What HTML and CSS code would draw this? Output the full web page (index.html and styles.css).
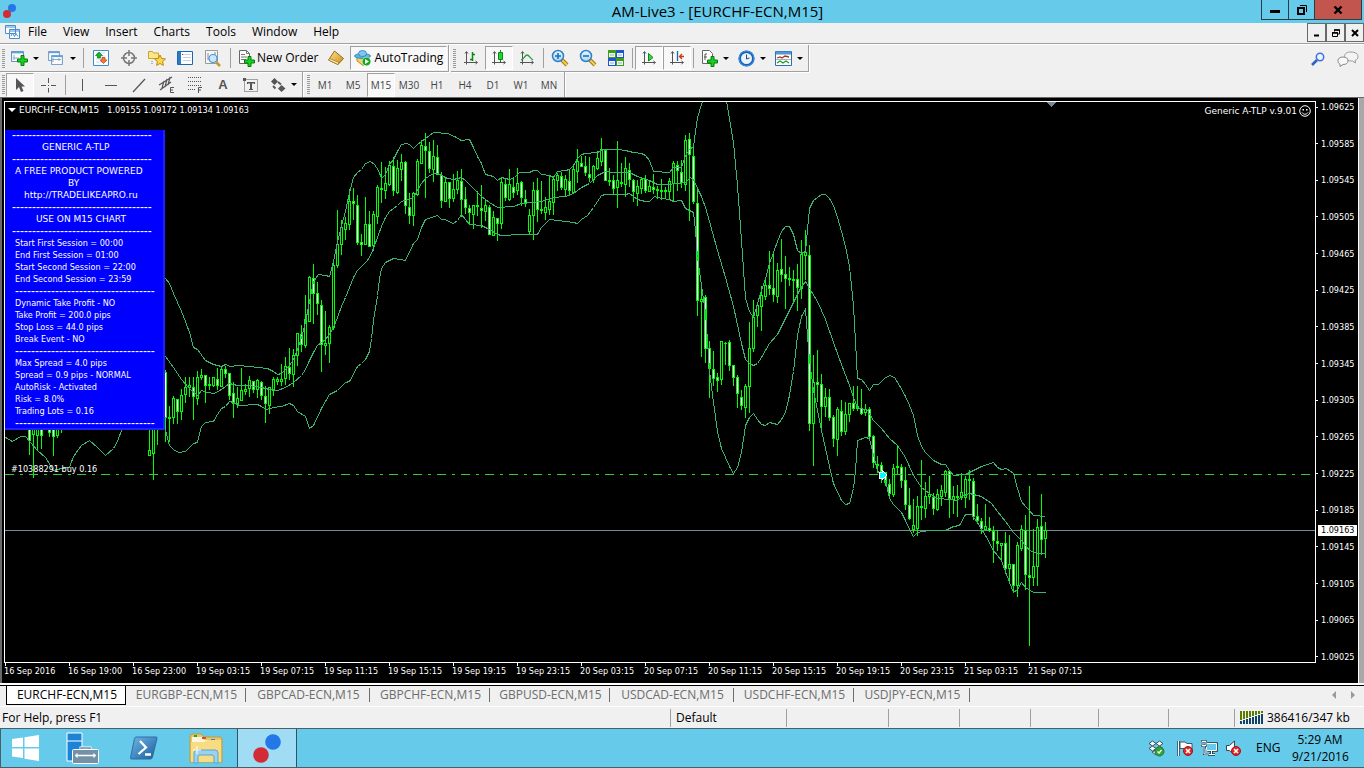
FILE: index.html
```html
<!DOCTYPE html>
<html lang="en">
<head>
<meta charset="utf-8">
<title>AM-Live3 - [EURCHF-ECN,M15]</title>
<link rel="stylesheet" href="styles.css">
</head>
<body>
<svg class="defs" aria-hidden="true">
  <defs>
    <linearGradient id="gold" x1="0" y1="0" x2="1" y2="1"><stop offset="0" stop-color="#ffe79a"/><stop offset="1" stop-color="#c98a12"/></linearGradient>
    <linearGradient id="lens" x1="0" y1="0" x2="0" y2="1"><stop offset="0" stop-color="#e8f6ff"/><stop offset="1" stop-color="#a9d6f5"/></linearGradient>
    <linearGradient id="ps" x1="0" y1="0" x2="1" y2="1"><stop offset="0" stop-color="#6fb7e6"/><stop offset="1" stop-color="#1a5c9c"/></linearGradient>
    <symbol id="plus" viewBox="0 0 11 11"><path d="M4 .5h3V4h3.500v3H7v3.500H4V7H.5V4H4z" fill="#19d021" stroke="#067d0b"/></symbol>
    <symbol id="err" viewBox="0 0 10 10"><circle cx="5" cy="5" r="4.500" fill="#dc2a2a" stroke="#a81212"/><path d="M3 3l4 4M7 3L3 7" stroke="#fff" stroke-width="1.600"/></symbol>
    <symbol id="zoomer" viewBox="0 0 18 18"><path d="M11 11l5 5" stroke="#a87a12" stroke-width="4"/><path d="M11 11l5 5" stroke="#f3cf52" stroke-width="2"/><circle cx="7" cy="7" r="5.500" fill="url(#lens)" stroke="#2f7fc4" stroke-width="1.500"/></symbol>
    <symbol id="axes" viewBox="0 0 16 16"><path d="M3.500 2v12.500M1 12.500h13M2 3.500L3.500 1.500 5 3.500M12.500 11l2 1.500-2 1.500" fill="none" stroke="#555"/></symbol>
    <symbol id="win" viewBox="0 0 16 14"><path d="M.5.5h15v13H.5z" fill="#fff" stroke="#2d6fb3"/><path d="M1 2h14" stroke="#5aa0dc" stroke-width="2"/></symbol>
  </defs>
</svg>
<div class="screen">
  <header class="titlebar">
    <svg class="logo" width="16" height="16" viewBox="0 0 16 16"><circle cx="10" cy="5" r="4" fill="#2377e8"/><circle cx="5" cy="11" r="4" fill="#d22b35"/></svg>
    <h1 class="title">AM-Live3 - [EURCHF-ECN,M15]</h1>
    <div class="caption">
      <button class="cap cap-min" aria-label="Minimize"><svg width="10" height="10" viewBox="0 0 10 10"><path d="M0 5h10v3H0z"/></svg></button>
      <button class="cap cap-max" aria-label="Restore"><svg width="10" height="10" viewBox="0 0 10 10"><path d="M3 .5h6.500V7" fill="none" stroke="#000"/><path d="M1 3h6v6H1z" fill="none" stroke="#000" stroke-width="2"/></svg></button>
      <button class="cap cap-close" aria-label="Close"><svg width="10" height="10" viewBox="0 0 10 10"><path d="M1.500 1.500l7 7M8.500 1.500l-7 7" stroke="#000" stroke-width="2.400"/></svg></button>
    </div>
  </header>

  <nav class="menubar" aria-label="Menu">
    <svg class="doc" width="16" height="15" viewBox="0 0 16 15"><path d="M.5.5h10v8H.5zM4.500 4.500h10v9h-10z" fill="#fff" stroke="#4b8ed0"/><path d="M4.500 6h10M.5 2h10" stroke="#4b8ed0"/><path d="M6 11l1.500-3 2 3.500 1.500-3 2 3" fill="none" stroke="#4b8ed0"/></svg>
    <button>File</button><button>View</button><button>Insert</button><button>Charts</button><button>Tools</button><button>Window</button><button>Help</button>
    <div class="mdi">
      <button aria-label="Minimize chart"><svg width="8" height="8" viewBox="0 0 8 8"><path d="M1 5.500h5v2H1z"/></svg></button>
      <button aria-label="Restore chart"><svg width="8" height="8" viewBox="0 0 8 8"><path d="M2.500 2.500V1h5v4H6M.5 3.500h5v4h-5z" fill="none" stroke="#000"/><path d="M2 1h6M0 4h6" stroke="#000" stroke-width="1.500"/></svg></button>
      <button aria-label="Close chart"><svg width="8" height="8" viewBox="0 0 8 8"><path d="M1 1l6 6M7 1L1 7" stroke="#000" stroke-width="2"/></svg></button>
    </div>
  </nav>

  <div class="toolrow">
    <div class="toolbar lead" role="toolbar" aria-label="Standard">
      <span class="grip"></span>
      <button class="drop" aria-label="New chart"><svg width="18" height="16" viewBox="0 0 18 16"><use href="#win" x="1" y="1" width="13" height="11"/><path d="M4 5v5M3 8h6" stroke="#8ab"/><use href="#plus" x="7" y="5" width="11" height="11"/></svg><i></i></button>
      <button class="drop" aria-label="Profiles"><svg width="18" height="16" viewBox="0 0 18 16"><use href="#win" x="0" y="1" width="14" height="10"/><use href="#win" x="3" y="5" width="14" height="10"/><path d="M5 9.500h9M6 8v4M12 8v3" stroke="#8ab"/></svg><i></i></button>
      <span class="sep"></span>
      <button class="tool" aria-label="Market Watch"><svg width="16" height="16" viewBox="0 0 16 16"><path d="M.5.5h15v15H.5z" fill="#fff" stroke="#3b8ed0"/><path d="M3 3h9M3 6h9M3 9h9M3 12h9" stroke="#cde" /><path d="M6 2L9.500 5.500H7.500V8h-3V5.500H2.500z" fill="#19b52a" stroke="#0b7d17" stroke-width=".7"/><path d="M10.500 13.500L7 10h2V7.500h3V10h2z" fill="#f2793a" stroke="#b83d0c" stroke-width=".7"/></svg></button>
      <button class="tool" aria-label="Data Window"><svg width="16" height="16" viewBox="0 0 16 16"><circle cx="8" cy="8" r="5.500" fill="none" stroke="#777" stroke-width="1.500"/><path d="M8 0v6M8 10v6M0 8h6M10 8h6" stroke="#777" stroke-width="1.500"/></svg></button>
      <button class="tool" aria-label="Navigator"><svg width="18" height="16" viewBox="0 0 18 16"><path d="M.5 8.500v-7h4l1 1.500h5v5.500z" fill="#fbe68a" stroke="#c9a227"/><path d="M4 11v4" stroke="#777" stroke-dasharray="1 1"/><path d="M12 5l1.600 3.500 3.900.4-2.900 2.600.8 3.900L12 13.500l-3.400 1.900.8-3.900-2.900-2.600 3.900-.4z" fill="#ffd84a" stroke="#b98a12"/></svg></button>
      <button class="tool" aria-label="Terminal"><svg width="16" height="14" viewBox="0 0 16 14"><path d="M.5.5h15v13H.5z" fill="#fff" stroke="#1e66b0"/><path d="M1 1h3v12H1z" fill="#2d7ac4"/><path d="M6 3.500h8M6 6.500h8M6 9.500h8" stroke="#bcd3ea"/><path d="M5 3h1v1H5z" fill="#d22"/></svg></button>
      <button class="tool" aria-label="Strategy Tester"><svg width="18" height="17" viewBox="0 0 18 17"><path d="M1.500.5h12v13h-12z" fill="#f6f6f6" stroke="#999"/><path d="M4 3v7M11 2v5" stroke="#88a"/><path d="M12 12l4 4" stroke="#c7962a" stroke-width="2.500"/><circle cx="9" cy="8.500" r="4" fill="#cbe7fb" stroke="#4b94cc" stroke-width="1.200"/></svg></button>
      <span class="sep"></span>
      <button class="label"><svg width="17" height="17" viewBox="0 0 17 17"><path d="M1.500.5h7l3 3v10h-10z" fill="#fff" stroke="#666"/><path d="M8.500.5v3h3M3 4.500h4M3 7h6M3 9.500h5" fill="none" stroke="#777"/><use href="#plus" x="6" y="6" width="11" height="11"/></svg>New Order</button>
      <button class="tool" aria-label="MetaEditor"><svg width="16" height="16" viewBox="0 0 16 16"><path d="M6.500 1L15.500 8.500 10 14.500 .5 10z" fill="url(#gold)" stroke="#9a6a0c"/><path d="M.5 10L10 14.500 11 12.500 1.500 8.500z" fill="#fff3c0" stroke="#9a6a0c" stroke-width=".7"/></svg></button>
      <button class="label pressed"><svg width="18" height="16" viewBox="0 0 18 16"><path d="M3 7l11-1 1 4-6 5.500L3 11z" fill="#f4d160" stroke="#b58d22"/><ellipse cx="8.500" cy="6" rx="8" ry="2.500" fill="#5cb3e6" stroke="#2b7fb8" stroke-width=".8"/><ellipse cx="8.500" cy="3.500" rx="4" ry="3" fill="#7cc8f0" stroke="#2b7fb8" stroke-width=".8"/><circle cx="12.500" cy="11.500" r="4.300" fill="#12a81c" stroke="#fff" stroke-width=".5"/><path d="M11 9l4 2.500-4 2.500z" fill="#fff"/></svg>AutoTrading</button>
    </div>
    <div class="toolbar" role="toolbar" aria-label="Charts">
      <span class="grip"></span>
      <button class="tool" aria-label="Bar chart"><svg width="16" height="16" viewBox="0 0 16 16"><use href="#axes" width="16" height="16"/><path d="M9.500 2v9M7 9.500h2M10 4.500h2" stroke="#078a10" stroke-width="1.500"/></svg></button>
      <button class="tool pressed" aria-label="Candlesticks"><svg width="16" height="16" viewBox="0 0 16 16"><use href="#axes" width="16" height="16"/><path d="M9.500 0v12" stroke="#078a10"/><path d="M7.500 2.500h4v7h-4z" fill="#27d13a" stroke="#078a10"/></svg></button>
      <button class="tool" aria-label="Line chart"><svg width="16" height="16" viewBox="0 0 16 16"><use href="#axes" width="16" height="16"/><path d="M2 10c3-1 4-5 6-5s3 3 6 5" fill="none" stroke="#2d9a35" stroke-width="1.300"/></svg></button>
      <span class="sep"></span>
      <button class="tool" aria-label="Zoom In"><svg width="18" height="18" viewBox="0 0 18 18"><use href="#zoomer" width="18" height="18"/><path d="M4 7h6M7 4v6" stroke="#1f6fb5" stroke-width="1.600"/></svg></button>
      <button class="tool" aria-label="Zoom Out"><svg width="18" height="18" viewBox="0 0 18 18"><use href="#zoomer" width="18" height="18"/><path d="M4 7h6" stroke="#1f6fb5" stroke-width="1.600"/></svg></button>
      <button class="tool" aria-label="Tile Windows"><svg width="16" height="16" viewBox="0 0 16 16"><path d="M0 0h8v8H0z" fill="#3f9d1c"/><path d="M8 0h8v8H8z" fill="#1d55cc"/><path d="M0 8h8v8H0z" fill="#1d55cc"/><path d="M8 8h8v8H8z" fill="#3f9d1c"/><path d="M1 3h6v4H1zM9 3h6v4H9zM1 11h6v4H1zM9 11h6v4H9z" fill="#f4f8ff"/><path d="M2 5h4M10 5h4M2 13h4M10 13h4" stroke="#9ab"/></svg></button>
      <span class="sep"></span>
      <button class="tool pressed" aria-label="Auto Scroll"><svg width="16" height="16" viewBox="0 0 16 16"><use href="#axes" width="16" height="16"/><path d="M7.500 3.500l4.500 4-4.500 3.500z" fill="#3fd34d" stroke="#078a10"/></svg></button>
      <button class="tool pressed" aria-label="Chart Shift"><svg width="16" height="16" viewBox="0 0 16 16"><use href="#axes" width="16" height="16"/><path d="M8.500 1v10" stroke="#1c64b8" stroke-width="1.300"/><path d="M15 6.500h-4M13 4l-2.500 2.500L13 9" fill="none" stroke="#c43a12" stroke-width="1.300"/></svg></button>
      <span class="sep"></span>
      <button class="drop" aria-label="Indicators"><svg width="17" height="17" viewBox="0 0 17 17"><path d="M1.500.5h7l3 3v10h-10z" fill="#fff" stroke="#666"/><path d="M4 10V4h2M3 7h3" fill="none" stroke="#555"/><use href="#plus" x="6" y="6" width="11" height="11"/></svg><i></i></button>
      <button class="drop" aria-label="Periods"><svg width="17" height="17" viewBox="0 0 17 17"><circle cx="8.500" cy="8.500" r="6.800" fill="#e8f3fb" stroke="#1560b8" stroke-width="2.600"/><circle cx="8.500" cy="8.500" r="7.500" fill="none" stroke="#54a5ea" stroke-width=".8"/><path d="M8.500 4.500v4.500l3-1" fill="none" stroke="#345"/></svg><i></i></button>
      <button class="drop" aria-label="Templates"><svg width="17" height="15" viewBox="0 0 17 15"><path d="M.5.5h16v14H.5z" fill="#fff" stroke="#2d6fb3"/><path d="M1 2h15" stroke="#4f97da" stroke-width="3"/><path d="M2 7l3-1 2 1 3-2 4 1" fill="none" stroke="#b03010" stroke-width="1.300"/><path d="M2 12l3-2 3 2 3-2 3 2" fill="none" stroke="#1d9a2b" stroke-width="1.200"/><path d="M1 8.500h15" stroke="#9bb"/></svg><i></i></button>
    </div>
    <div class="rowend">
      <button aria-label="Search"><svg width="14" height="14" viewBox="0 0 14 14"><path d="M6 8L1 13" stroke="#2f62c8" stroke-width="2.600"/><circle cx="9" cy="5" r="3.700" fill="#eaf3ff" stroke="#3f72d8" stroke-width="1.500"/></svg></button>
      <button aria-label="Community"><svg width="22" height="16" viewBox="0 0 22 16"><path d="M14 1c4 0 7 1.600 7 4.500 0 2-1 3.200-3 3.900l.5 2.600-3-2c-5 0-8-1.500-8-4.500S10 1 14 1z" fill="#f4f4f4" stroke="#999"/><path d="M6 6c3 0 5 1.300 5 3.800S9 13.500 6 13.500L3 15.500v-2.300C1.500 12.500 1 11.200 1 9.800 1 7.300 3 6 6 6z" fill="#f8f8fc" stroke="#888"/></svg></button>
    </div>
  </div>

  <div class="toolrow toolrow-last">
    <div class="toolbar lead" role="toolbar" aria-label="Line Studies">
      <span class="grip"></span>
      <button class="tool pressed" aria-label="Cursor"><svg width="16" height="16" viewBox="0 0 16 16"><path d="M4 1v12l3-3 2 5 2.500-1-2-4.500H13z" fill="#555"/></svg></button>
      <button class="tool" aria-label="Crosshair"><svg width="16" height="16" viewBox="0 0 16 16"><path d="M8.500 1v5M8.500 11v4.500M1 8.500h5M11 8.500h5M8 8.500h1" stroke="#555"/></svg></button>
      <span class="sep"></span>
      <button class="tool" aria-label="Vertical Line"><svg width="16" height="16" viewBox="0 0 16 16"><path d="M7.500 2v12" stroke="#555"/></svg></button>
      <button class="tool" aria-label="Horizontal Line"><svg width="16" height="16" viewBox="0 0 16 16"><path d="M2 8.500h12" stroke="#555"/></svg></button>
      <button class="tool" aria-label="Trendline"><svg width="16" height="16" viewBox="0 0 16 16"><path d="M2 15L14 2" stroke="#555" stroke-width="1.200"/></svg></button>
      <button class="tool" aria-label="Equidistant Channel"><svg width="18" height="18" viewBox="0 0 18 18"><path d="M1 9L14 1M2 14L13 6M4 12l2-7M7 11l2-8M10 9l2-8" stroke="#555" stroke-width="1.200"/><path d="M16 11.500h-3.500v5H16M12.500 14H15" fill="none" stroke="#555"/></svg></button>
      <button class="tool" aria-label="Fibonacci Retracement"><svg width="18" height="18" viewBox="0 0 18 18"><path d="M2 1.500h14M2 5.500h14M2 9.500h14M2 13.500h8" stroke="#555" stroke-dasharray="1 1"/><path d="M16 11.500h-3.500V17M12.500 14H15" fill="none" stroke="#555"/></svg></button>
      <button class="tool glyph" aria-label="Text">A</button>
      <button class="tool" aria-label="Text Label"><svg width="16" height="16" viewBox="0 0 16 16"><path d="M1.500 2.500h13v12h-13z" fill="none" stroke="#555" stroke-dasharray="1 1"/><path d="M4 5h8v2h-1V6.500H9V12h1v1H6v-1h1V6.500H5V7H4zM0 1h3v3H0z" fill="#555"/></svg></button>
      <button class="drop" aria-label="Arrows"><svg width="16" height="14" viewBox="0 0 16 14"><path d="M4.500 0L8 3.500 4.500 7 1 3.500zM11.500 7l4 3.500-4 3.500L8 10.500z" fill="#555"/><path d="M3 8l2.500 2.500M8 4l3 2.500" stroke="#555" stroke-width="1.800"/></svg><i></i></button>
    </div>
    <div class="toolbar periods" role="toolbar" aria-label="Periodicity">
      <span class="grip"></span>
      <button class="tool">M1</button><button class="tool">M5</button><button class="tool pressed">M15</button><button class="tool">M30</button><button class="tool">H1</button><button class="tool">H4</button><button class="tool">D1</button><button class="tool">W1</button><button class="tool">MN</button>
    </div>
  </div>

  <main class="chart">
    <div class="chart-body">
      <section class="plot" aria-label="EURCHF-ECN,M15 chart">
        <svg class="series" id="series" shape-rendering="crispEdges" aria-hidden="true"></svg>
        <p class="ohlc"><span class="caret"></span><span class="caps">EURCHF-ECN,M15</span><span>1.09155 1.09172 1.09134 1.09163</span></p>
        <p class="expert caps">Generic A-TLP v.9.01<svg width="12" height="12" viewBox="0 0 12 12"><circle cx="6" cy="6" r="5.300" fill="none" stroke="#fff"/><path d="M3.500 4h1.500v1.500H3.500zM7 4h1.500v1.500H7z" fill="#fff"/><path d="M3 7.500c1.500 2.300 4.500 2.300 6 0" fill="none" stroke="#fff"/></svg></p>
        <p class="order">#10388291 buy 0.16</p>
        <aside class="panel">
          <p class="rule">-----------------------------------</p>
          <p class="caps c1">GENERIC A-TLP</p>
          <p class="rule">-----------------------------------</p>
          <p class="caps">A FREE PRODUCT POWERED</p>
          <p class="caps c2">BY</p>
          <p class="caps c3">http://TRADELIKEAPRO.ru</p>
          <p class="rule">-----------------------------------</p>
          <p class="caps c4">USE ON M15 CHART</p>
          <p class="rule">-----------------------------------</p>
          <p>Start First Session = 00:00</p>
          <p>End First Session = 01:00</p>
          <p>Start Second Session = 22:00</p>
          <p>End Second Session = 23:59</p>
          <p class="rule in">-----------------------------------</p>
          <p>Dynamic Take Profit - NO</p>
          <p>Take Profit = 200.0 pips</p>
          <p>Stop Loss = 44.0 pips</p>
          <p>Break Event - NO</p>
          <p class="rule in">-----------------------------------</p>
          <p>Max Spread = 4.0 pips</p>
          <p>Spread = 0.9 pips - NORMAL</p>
          <p>AutoRisk - Activated</p>
          <p>Risk = 8.0%</p>
          <p>Trading Lots = 0.16</p>
          <p class="rule in">-----------------------------------</p>
        </aside>
      </section>
      <div class="scale">
        <span>1.09625</span><span>1.09585</span><span>1.09545</span><span>1.09505</span><span>1.09465</span><span>1.09425</span><span>1.09385</span><span>1.09345</span><span>1.09305</span><span>1.09265</span><span>1.09225</span><span>1.09185</span><span>1.09145</span><span>1.09105</span><span>1.09065</span><span>1.09025</span>
        <b class="bid">1.09163</b>
      </div>
    </div>
    <div class="times">
      <span>16 Sep 2016</span><span>16 Sep 19:00</span><span>16 Sep 23:00</span><span>19 Sep 03:15</span><span>19 Sep 07:15</span><span>19 Sep 11:15</span><span>19 Sep 15:15</span><span>19 Sep 19:15</span><span>19 Sep 23:15</span><span>20 Sep 03:15</span><span>20 Sep 07:15</span><span>20 Sep 11:15</span><span>20 Sep 15:15</span><span>20 Sep 19:15</span><span>20 Sep 23:15</span><span>21 Sep 03:15</span><span>21 Sep 07:15</span>
    </div>
  </main>

  <div class="tabs">
    <button class="tab active">EURCHF-ECN,M15</button><button class="tab">EURGBP-ECN,M15</button><button class="tab wide">GBPCAD-ECN,M15</button><button class="tab">GBPCHF-ECN,M15</button><button class="tab">GBPUSD-ECN,M15</button><button class="tab wide">USDCAD-ECN,M15</button><button class="tab">USDCHF-ECN,M15</button><button class="tab last">USDJPY-ECN,M15</button>
    <div class="tabnav">
      <button aria-label="Previous tabs"><svg width="4" height="8" viewBox="0 0 4 8"><path d="M4 0v8L0 4z" fill="#999"/></svg></button>
      <button aria-label="Next tabs"><svg width="4" height="8" viewBox="0 0 4 8"><path d="M0 0v8l4-4z" fill="#999"/></svg></button>
    </div>
  </div>

  <footer class="status">
    <span class="help">For Help, press F1</span><span class="s116">Default</span><span class="s102"></span><span class="s71"></span><span class="s71"></span><span class="s68"></span><span class="s70"></span><span class="s66"></span>
    <span class="traffic"><svg width="24" height="13" viewBox="0 0 24 13" shape-rendering="crispEdges"><path d="M1 0v9M4 0v8M7 0v7M10 0v6M13 0v5M16 0v4M19 0v3M22 0v2" stroke="#5a7a00" stroke-width="2"/><path d="M1 10v3M4 9v4M7 8v5M10 7v6M13 6v7M16 5v8M19 4v9M22 3v10" stroke="#0f4468" stroke-width="2"/></svg>386416/347 kb</span>
  </footer>

  <div class="taskbar">
    <button class="task start" aria-label="Start"><svg width="28" height="26" viewBox="0 0 28 26"><path d="M0 4l11-1.500V12H0zM12.500 2.300L27 0v12H12.500zM0 13.500h11V23L0 21.500zM12.500 13.500H27V26l-14.500-2.300z" fill="#fff"/></svg></button>
    <button class="task" aria-label="Server Manager"><svg width="33" height="33" viewBox="0 0 33 33"><path d="M1 1h15v28H1z" fill="#1b84d6" stroke="#fff"/><path d="M1 9h15" stroke="#fff"/><path d="M15 18v-2h9v2" fill="none" stroke="#fff" stroke-width="3"/><path d="M15 18v-2h9v2" fill="none" stroke="#6d8ba4" stroke-width="1.500"/><rect x="6.500" y="17.500" width="26" height="14" rx="1" fill="#7491a8" stroke="#fff"/><path d="M9 23.500h21M11 21.500v4M28 21.500v4" stroke="#fff" stroke-width="1.500"/></svg></button>
    <button class="task" aria-label="PowerShell"><svg width="28" height="24" viewBox="0 0 28 24"><path d="M6 1h20q1.500 0 1 1.500L22.500 21q-.5 2-2 2H1.500Q0 23 .5 21.500L4.500 2.500Q5 1 6 1z" fill="url(#ps)" stroke="#2f6ea6"/><path d="M10 5l6 6.500L8.500 18M15 18.500h6" fill="none" stroke="#fff" stroke-width="2.300"/></svg></button>
    <button class="task" aria-label="File Explorer"><svg width="34" height="31" viewBox="0 0 34 31"><path d="M1 4q0-3 3-3h8l3 3h16q2 0 2 3v22H1z" fill="#e9c766" stroke="#c69a38"/><path d="M3 4h10l2 3h16v4H3z" fill="#fdf6dd"/><path d="M5 2h3v2H5z" fill="#21a62b"/><path d="M13 4h4v2h-4z" fill="#d0512c"/><path d="M22 6h4v2h-4z" fill="#2a8bd8"/><path d="M2 9h13l3-2h14v22H2z" fill="#f8dc82"/><path d="M5 30V20q0-3 3-3h18q3 0 3 3v10h-4v-6q0-2-2-2H11q-2 0-2 2v6z" fill="#9bd2ee" stroke="#5aa5cc"/><path d="M8 13v8M4 17h8" stroke="#fff"/></svg></button>
    <button class="task running" aria-label="MetaTrader"><svg width="28" height="30" viewBox="0 0 28 30"><circle cx="20" cy="9" r="7.800" fill="#2377e8"/><circle cx="8" cy="22" r="7.800" fill="#d22b35"/></svg></button>
    <div class="tray">
      <svg width="17" height="17" viewBox="0 0 17 17"><path d="M4.500 1L1 3.500 4.500 6 8 3.500 11.500 6 15 3.500 11.500 1 8 3.500zM4.500 6L1 8.500 4.500 11 8 8.500 11.500 11 15 8.500 11.500 6 8 8.500zM4 12l4 3 4-3-4-2z" fill="#fff" stroke="#3b5361"/><circle cx="11.500" cy="11.500" r="4.500" fill="#2fa43a" stroke="#1c7c28"/><path d="M9.500 11.500l1.500 1.500 2.500-3" fill="none" stroke="#fff" stroke-width="1.300"/></svg>
      <svg class="flag" width="17" height="17" viewBox="0 0 17 17"><path d="M1.500 1v15" stroke="#345" stroke-width="2.500"/><path d="M1.500 1v15" stroke="#fff"/><path d="M3 2h5l2 1.500h5V10H9L7.500 8.500H3z" fill="#fff" stroke="#345" stroke-width=".9"/><use href="#err" x="6" y="6" width="10" height="10"/></svg>
      <svg width="17" height="17" viewBox="0 0 17 17"><path d="M5.500 3.500h10v7h-10zM10.500 11v3M7 14.500h7" fill="none" stroke="#234" stroke-width="2.600"/><path d="M5.500 3.500h10v7h-10z" fill="#66cbea" stroke="#fff"/><path d="M10.500 11v3M7 14.500h7" stroke="#fff"/><path d="M1 1.500h4v4H1zM3 6v8h5" fill="#66cbea" stroke="#234" stroke-width="2"/><path d="M1 1.500h4v4H1zM3 6v8h5" fill="none" stroke="#fff"/></svg>
      <svg class="snd" width="17" height="17" viewBox="0 0 17 17"><path d="M1.500 5.500h3l5-4.500v14l-5-4.500h-3z" fill="#fff" stroke="#345"/><use href="#err" x="6" y="6" width="10" height="10"/></svg>
      <span class="lang">ENG</span>
      <time class="clock">5:29 AM<br>9/21/2016</time>
    </div>
  </div>
</div>
<script src="chart.js"></script>
</body>
</html>
```

FILE: styles.css
```css
* { box-sizing: border-box; }
:root {
  --face: #f0f0f0;
  --shade: #a0a0a0;
  --sky: #66cbea;
  --ui: "Open Sans", "Noto Sans", sans-serif;
  --small: "DejaVu Sans Condensed", "DejaVu Sans", sans-serif;
}
body { margin: 0; background: var(--face); color: #000; font: 12px/16px var(--ui); }
p, h1 { margin: 0; }
button { margin: 0; padding: 0; border: 0; background: none; color: inherit; font: inherit; }
svg { display: block; flex: none; }
.defs { position: absolute; width: 0; height: 0; }
.screen { display: flex; flex-direction: column; height: 100vh; overflow: hidden; }

.titlebar { display: flex; flex: none; height: 23px; background: var(--sky); }
.logo { margin: 3px 0 0 2px; }
.title { flex: 1; padding-left: 156px; text-align: center; font-size: 15px; line-height: 23px; font-weight: 400; }
.caption { display: flex; align-items: flex-start; padding-right: 2px; }
.cap { display: flex; align-items: center; justify-content: center; height: 20px; border: 1px solid #2b3c44; border-top: 0; border-left-width: 0; }
.cap-min { width: 28px; border-left-width: 1px; }
.cap-max { width: 26px; }
.cap-close { width: 47px; background: #c2564f; }

.menubar { display: flex; flex: none; align-items: center; height: 22px; padding: 0 0 3px 5px; border-bottom: 1px solid #fff; box-shadow: inset 0 -1px var(--shade); }
.doc { margin-right: 7px; }
.menubar > button { margin-right: 16px; }
.mdi { display: flex; align-self: flex-start; margin-left: auto; }
.mdi button { display: flex; align-items: center; justify-content: center; width: 19px; height: 19px; border: 1px solid #696969; }

.toolrow { display: flex; flex: none; height: 27px; }
.toolrow-last { height: 25px; }
.toolbar { display: flex; align-items: center; padding-right: 1px; border-right: 1px solid var(--shade); border-bottom: 1px solid var(--shade); box-shadow: 1px 1px #fff; }
.toolbar + .toolbar { margin-left: 2px; }
.toolrow-last .toolbar { border-bottom: 0; box-shadow: 1px 0 #fff; }
.toolrow-last .lead { padding-right: 0; }
.grip { width: 3px; height: 19px; margin: 0 1px 0 2px; background: repeating-linear-gradient(#999 0 1px, transparent 1px 2px); }
.sep { width: 1px; height: 20px; margin: 0 2px; background: var(--shade); }
.lead .sep { margin: 0 3px; }
.tool, .drop, .label { display: flex; align-items: center; justify-content: center; height: 24px; border: 1px solid transparent; }
.tool { width: 28px; }
.drop { width: 37px; gap: 5px; }
.drop i { border: 3px solid transparent; border-top-color: #000; border-bottom: 0; }
.label { gap: 2px; padding: 0 3px; }
.pressed { border-color: var(--shade) #fff #fff var(--shade); background: #f8f8f8; }
.glyph { color: #555; font: bold 13px/16px "Liberation Sans", sans-serif; }
.periods { color: #444; font-size: 10px; }
.rowend { display: flex; gap: 12px; align-items: center; margin-left: auto; padding-right: 5px; }

.chart { display: flex; flex: 1; flex-direction: column; min-height: 0; padding: 3px 1px 0 2px; border: solid #696969; border-width: 1px 0 0 2px; background: #000; color: #fff; box-shadow: inset -5px 0 #a8a8a8, inset -6px 0 #fff; font: 9px/12px var(--small); }
.caps { font-family: "DejaVu Sans", sans-serif; }
.chart-body { display: flex; flex: 1; min-height: 0; }
.plot { position: relative; flex: 1; min-width: 0; border: 1px solid #fff; overflow: hidden; }
.series { position: absolute; inset: 0; width: 100%; height: 100%; }
.ohlc, .expert, .order { position: absolute; display: flex; align-items: center; white-space: nowrap; }
.ohlc { top: 2px; left: 3px; }
.ohlc .caps { margin-right: 8px; }
.caret { margin-right: 3px; border: 4px solid transparent; border-top-color: #fff; border-bottom: 0; }
.expert { top: 3px; right: 4px; gap: 2px; }
.order { top: 361px; left: 6px; }
.panel { position: absolute; top: 28px; left: 0; width: 160px; padding: 0 0 1px 10px; background: #00f; box-shadow: inset -2px -2px #2020ff; white-space: nowrap; }
.panel p:first-child { margin-top: -1px; }
.rule { margin-left: -3px; font: 12px/12px "Liberation Sans", sans-serif; }
.rule.in { margin-left: 0; }
.c1 { padding-left: 27px; }
.c2 { padding-left: 53px; }
.c3 { padding-left: 9px; }
.c4 { padding-left: 21px; }
.scale { position: relative; display: flex; flex-direction: column; justify-content: space-between; width: 47px; }
.scale span { display: flex; align-items: center; gap: 3px; }
.scale span::before { content: ""; width: 2px; height: 1px; background: #fff; }
.bid { position: absolute; top: 424px; left: 2px; padding: 0 3px; line-height: 11px; background: #fff; color: #000; font-weight: 400; }
.times { display: flex; flex: none; height: 22px; line-height: 11px; }
.times span { flex: none; width: 64px; white-space: nowrap; }
.times span::before { content: ""; display: block; width: 1px; height: 3px; margin-left: 1px; background: #fff; }

.tabs { display: flex; flex: none; align-items: center; height: 22px; padding: 0 0 2px 6px; border-top: 1px solid #000; border-bottom: 1px solid #fff; box-shadow: 0 -2px #fff; color: #6d6d6d; z-index: 1; }
.tab { width: 120px; height: 14px; padding-left: 2px; line-height: 14px; border-right: 1px solid #6d6d6d; }
.tab.wide { width: 124px; }
.tab.last { width: 116px; }
.tab.active { align-self: flex-start; height: 19px; border: solid #000; border-width: 0 1px 1px; background: #fff; color: #000; line-height: 18px; }
.tabnav { display: flex; gap: 15px; margin-left: auto; padding-right: 9px; }

.status { display: flex; flex: none; align-items: center; height: 21px; }
.status > span { flex: none; height: 18px; line-height: 18px; border-left: 1px solid var(--shade); padding-left: 5px; }
.status .help { flex: 1; padding-left: 2px; border-left: 0; }
.s116 { width: 116px; }
.s102 { width: 102px; }
.s71 { width: 71px; }
.s68 { width: 68px; }
.s70 { width: 70px; }
.s66 { width: 66px; }
.status .traffic { display: flex; align-items: center; gap: 3px; width: 130px; }

.taskbar { display: flex; flex: none; height: 40px; border: 1px solid #4d5d66; border-right: 0; background: var(--sky); }
.task { display: flex; align-items: center; justify-content: center; width: 62px; }
.start { width: 50px; }
.running { width: 60px; border: solid #2f5364; border-width: 0 1px; background: #a0dcf3; }
.tray { display: flex; align-items: center; margin-left: auto; padding-right: 16px; }
.flag { margin: 0 7px 0 12px; }
.snd { margin: 0 14px 0 7px; }
.lang { width: 36px; }
.clock { width: 56px; text-align: center; line-height: 17px; white-space: nowrap; }
```

FILE: chart.js
```javascript
// Bars: [high, body top, body bottom, low, falling]; heights are thirds of a pixel below the block's y.
const blocks = [
  { x: 29, y: 98, bars: [[900,960,1028,1073,1],[900,950,1010,1142,0],[900,950,1012,1060,0],[900,950,1013,1055,1]] },
  { x: 49, y: 98, bars: [[900,950,1004,1018,1],[900,950,1015,1074,1],[900,950,1013,1020,0],[900,950,980,1005,0]] },
  { x: 149, y: 98, bars: [[900,1058,1072,1072,0],[900,950,1067,1147,0],[900,950,990,1042,0]] },
  { x: 165, y: 120, bars: [[750,757,891,967,1],[858,892,896,968,0],[828,835,892,914,0],[838,838,873,914,1],[807,826,874,902,0],[771,802,824,850,0],[771,796,802,833,0],[771,802,830,902,1],[753,772,835,857,0],[747,766,773,782,0],[765,766,797,851,1],[771,793,797,812,0],[771,772,797,803,0],[744,778,795,812,1],[739,748,799,803,0],[738,748,760,774,1],[759,760,827,842,1],[786,820,850,895,1],[801,835,850,866,0],[744,811,842,842,0],[793,808,814,826,0],[769,781,806,833,0],[783,785,808,820,1],[777,781,808,836,0],[785,787,826,840,1],[799,829,850,910,1],[801,802,857,884,0],[771,778,812,830,0],[771,779,783,795,0],[732,778,783,800,0],[711,739,776,795,0],[684,742,760,780,1],[687,706,764,803,0],[640,640,706,740,0],[615,643,674,696,1],[525,598,677,686,0],[469,472,605,608,0],[432,475,520,614,1],[486,520,550,587,1],[541,556,674,758,1],[573,670,677,707,0],[615,622,670,731,0],[430,436,622,632,0],[270,374,436,446,0],[301,322,374,407,0],[292,310,328,362,0],[207,244,314,331,0],[204,244,250,302,1],[225,256,368,377,1],[342,367,373,410,1],[231,313,374,377,0],[273,313,379,380,1],[273,283,377,394,0],[195,202,290,314,0],[126,205,209,251,1],[141,190,212,237,0],[124,136,194,200,0],[111,139,212,230,1],[120,145,217,222,0],[102,127,149,185,0],[123,127,256,284,1],[219,262,287,314,1],[216,220,287,318,0],[117,124,224,228,0],[60,76,130,134,0],[39,79,92,234,1],[66,94,146,161,1],[60,109,149,188,0],[75,112,163,167,1],[156,167,242,266,1],[171,187,244,246,0],[186,187,236,266,1],[162,208,236,248,0],[153,181,208,222,0]] },
  { x: 461, y: 100, bars: [[207,244,299,353,1],[262,298,322,342,1],[315,325,338,373,1],[315,317,344,389,0],[275,317,320,350,0],[256,325,332,386,1],[297,316,334,365,0],[315,322,403,405,1],[333,352,407,408,0],[354,355,371,425,1],[234,247,371,388,0],[237,253,293,304,1],[207,253,298,305,0],[234,262,278,296,1],[204,250,271,287,0],[244,247,293,318,1],[270,298,308,322,1],[327,346,395,404,0],[247,271,346,422,0],[235,271,328,366,1],[243,327,330,343,0],[291,322,338,362,0],[227,304,328,345,0],[228,238,308,345,0],[219,226,242,273,0],[216,229,263,270,1],[225,238,269,290,0],[207,244,272,282,1],[199,208,277,284,0],[147,184,214,251,0],[168,190,200,203,1],[169,199,217,230,1],[171,223,233,246,1],[195,199,238,250,0],[154,175,205,212,0],[114,149,185,200,0],[148,150,240,245,1],[205,240,243,260,0],[225,241,265,286,1],[123,241,263,326,0],[189,246,249,262,0],[171,205,254,291,0],[189,211,238,261,1],[238,240,275,308,1],[242,259,280,320,0],[235,238,266,284,0],[225,238,272,280,1],[240,259,275,278,0],[222,262,269,282,1],[258,268,271,297,1],[237,271,273,302,0],[263,271,275,298,1],[234,244,275,297,0],[183,190,250,305,0],[183,197,210,275,1],[180,217,248,265,1],[105,121,254,275,0],[99,118,163,363,1],[140,169,305,314,1]] },
  { x: 697, y: 100, bars: [[262,310,602,650,1],[553,598,604,773,0],[585,592,745,790,1],[723,745,806,896,1],[753,808,835,860,1],[819,832,842,876,1],[723,724,838,857,0],[726,729,731,797,0],[720,727,797,815,1],[795,796,832,860,1],[825,832,881,926,1],[870,892,917,930,1],[852,859,922,956,0],[666,745,859,941,0],[600,652,745,758,0],[610,616,646,682,0],[560,586,619,695,0],[534,556,589,602,0],[453,556,565,587,1],[453,565,584,606,1],[489,511,590,611,0],[417,508,524,548,1],[468,523,536,629,1],[501,535,539,560,0],[510,537,540,608,0],[492,538,563,635,1],[420,463,566,598,0],[390,457,466,540,0],[435,466,970,995,1],[765,847,970,1098,0],[750,847,853,906,1],[822,853,920,986,1],[864,892,920,953,0],[869,892,952,963,1],[945,952,1016,1043,1],[921,928,1019,1070,0],[900,934,995,1008,1],[906,943,994,1006,0],[909,910,943,968,0],[858,910,926,935,1],[858,919,926,935,0],[867,925,941,945,1],[912,928,937,950,0],[921,928,1010,1017,1],[1006,1010,1087,1104,1]] },
  { x: 877, y: 360, bars: [[288,313,316,340,0],[306,316,335,371,1],[336,337,368,378,1],[358,373,401,412,1],[312,325,404,413,0],[258,318,323,344,1],[313,321,362,386,1],[322,362,434,450,1],[386,436,476,482,1],[418,496,508,520,0],[408,438,506,530,0],[300,438,443,482,1],[366,409,446,474,0],[350,403,410,434,0],[399,412,446,466,1],[387,403,448,455,0],[375,390,410,440,0],[331,334,397,412,0],[330,334,415,474,1],[378,409,418,464,0],[375,408,411,471,0],[340,397,411,420,0],[348,358,412,444,0],[330,357,361,422,0],[354,363,469,480,1],[432,468,480,494,1],[474,484,506,524,1],[432,499,509,510,0],[471,505,510,518,1],[498,513,541,609,1],[512,544,551,573,1],[549,550,556,600,0],[516,550,626,644,1],[525,613,625,668,0],[612,613,676,693,1],[546,556,677,711,0],[495,508,565,575,0],[466,511,644,690,1],[378,646,652,860,1],[507,619,652,678,0],[477,502,619,678,0],[402,499,538,585,1],[486,511,535,594,0]] }
];

const bands = [
  "165,278 169,283 173,293 177,302 181,311 185,321 189,332 193,347 197,349 205,360 213,364 221,366 225,364 230,366 237,365 249,366 257,367 267,368 273,371 277,374 281,373 285,369 289,365 293,359 297,349 301,337 305,322 309,301 313,281 318,274 325,275 329,276 333,261 337,242 341,225 345,211 349,192 353,177 357,172 361,169 365,163 370,161 374,164 378,170 381,178 385,174 389,164 393,159 397,151 401,144 407,143 410,145 413,148 417,144 425,138 433,132 447,133 454,136 461,140 469,139 473,147 477,156 481,163 485,174 493,176 497,180 501,177 509,179 514,177 519,172 529,172 533,170 537,170 541,174 549,175 553,177 557,171 565,170 569,169 573,165 577,158 581,154 585,153 597,152 603,149 617,149 625,150 633,152 641,153 645,155 649,160 653,171 669,172 673,167 681,167 685,155 689,149 693,146 697,117 702,101 710,80 718,80 726,101 731,130 733,142 737,185 741,240 745,298 749,311 753,317 757,303 761,290 765,278 769,263 777,241 781,231 785,226 789,226 793,234 797,250 801,253 805,251 809,208 813,200 821,194 825,194 829,198 833,205 837,217 841,231 845,246 849,266 853,305 857,378 861,379 865,384 869,390 873,384 878,384 884,378 889,375 894,377 899,385 905,396 909,405 913,415 917,435 921,446 925,452 933,460 941,464 945,464 949,470 953,475 965,474 973,470 981,466 993,462 997,467 1001,469 1006,468 1013,473 1017,488 1021,501 1025,506 1029,510 1033,515 1045,516",
  "165,356 173,367 181,379 189,388 197,395 201,390 207,392 214,393 221,389 229,383 237,385 249,385 261,387 269,389 277,390 285,387 293,382 301,375 305,369 309,360 313,352 317,345 325,339 329,334 333,327 337,317 341,306 345,297 353,277 357,270 361,266 367,260 371,253 377,237 381,226 385,217 389,211 397,205 401,201 413,197 417,190 421,183 425,178 431,174 437,173 447,178 453,179 461,177 465,180 473,188 481,196 489,202 497,207 513,206 521,203 533,202 541,201 553,197 565,196 573,193 581,187 589,183 597,175 605,171 613,172 629,172 637,176 649,180 657,184 667,184 677,183 685,182 690,177 693,179 697,188 701,196 705,207 709,221 717,250 725,277 733,306 741,343 745,359 749,363 753,365 757,363 761,357 769,343 777,334 785,318 793,302 801,286 805,281 809,288 817,301 825,319 833,342 841,364 849,385 853,397 857,407 867,410 873,420 881,428 889,438 897,445 905,457 913,475 921,487 929,493 937,498 949,499 957,500 961,496 969,493 981,496 991,503 997,511 1005,521 1013,532 1021,540 1029,550 1037,553 1045,553",
  "5,437 12,441 20,436 25,436 30,442 37,450 45,457 53,470 61,468 69,467 73,456 81,445 89,440 97,447 105,455 113,448 117,441 121,430 130,420 160,420 165,430 169,445 173,449 178,452 185,451 193,443 197,442 201,426 205,422 213,421 217,414 221,408 225,406 229,401 233,402 239,405 257,404 261,406 266,409 273,407 281,406 289,403 293,405 297,411 305,416 309,428 313,425 321,408 329,394 337,390 345,382 349,381 357,366 361,363 365,359 369,351 371,338 373,320 377,295 379,278 381,268 385,262 393,258 405,260 413,243 417,239 421,227 425,219 437,215 441,219 444,219 453,223 457,220 461,214 469,224 481,225 489,229 497,234 501,235 521,234 537,234 541,227 549,219 557,220 573,222 577,223 581,219 587,215 593,207 601,195 605,194 625,194 629,193 637,199 645,201 649,201 654,196 661,198 669,199 673,201 681,200 685,208 693,212 695,230 697,257 701,285 705,312 709,370 713,402 717,431 721,448 729,466 733,473 737,467 741,452 745,425 749,417 753,413 757,419 761,424 765,425 769,422 777,424 781,419 785,412 789,395 793,371 797,335 801,316 805,309 807,335 809,360 813,390 821,430 829,466 833,483 841,500 845,504 849,503 853,488 855,470 857,440 865,437 869,438 873,455 877,470 885,480 889,498 893,504 901,512 905,520 909,529 913,536 917,532 929,530 945,530 953,526 959,525 965,514 971,514 977,522 985,535 993,550 1001,560 1009,582 1013,592 1017,589 1021,582 1025,587 1033,592 1045,592"
];

const box = (x, y, w, h) => `M${x} ${y}h${w}v${h}h${-w}z`;
let green = "", black = "", white = "";
for (const { x, y, bars } of blocks) {
  bars.forEach(([high, top, bottom, low, falling], i) => {
    const at = v => Math.floor(y + v / 3);
    const cx = x + i * 4;
    const t = at(top), h = Math.max(1, at(bottom) - t + 1);
    green += box(cx, at(high), 1, at(low) - at(high)) + box(cx - 1, t, 3, h);
    if (h > 2) {
      const inner = box(cx, t + 1, 1, h - 2);
      if (falling) white += inner; else black += inner;
    }
  });
}

// Window coordinates, moved to the plot's own origin.
document.getElementById("series").innerHTML = `
  <g transform="translate(-5 -102)">
    <path d="M5 530h1400v1H5z" fill="#778899"/>
    <path d="${green}" fill="#00ff00"/>
    <path d="${black}" fill="#000"/>
    <path d="${white}" fill="#fff"/>
    ${bands.map(b => `<polyline points="${b}" transform="translate(.5 .5)" fill="none" stroke="#3cb371"/>`).join("")}
    <path d="M5 474.500h1400" stroke="#32cd32" stroke-dasharray="9 6 3 6"/>
    <path d="M1046 102h11l-5.500 5z" fill="#778899"/>
    <path d="M879 472h3v-2l5 5-5 5v-2h-3z" fill="#00ffff" stroke="#fff"/>
  </g>`;
```
